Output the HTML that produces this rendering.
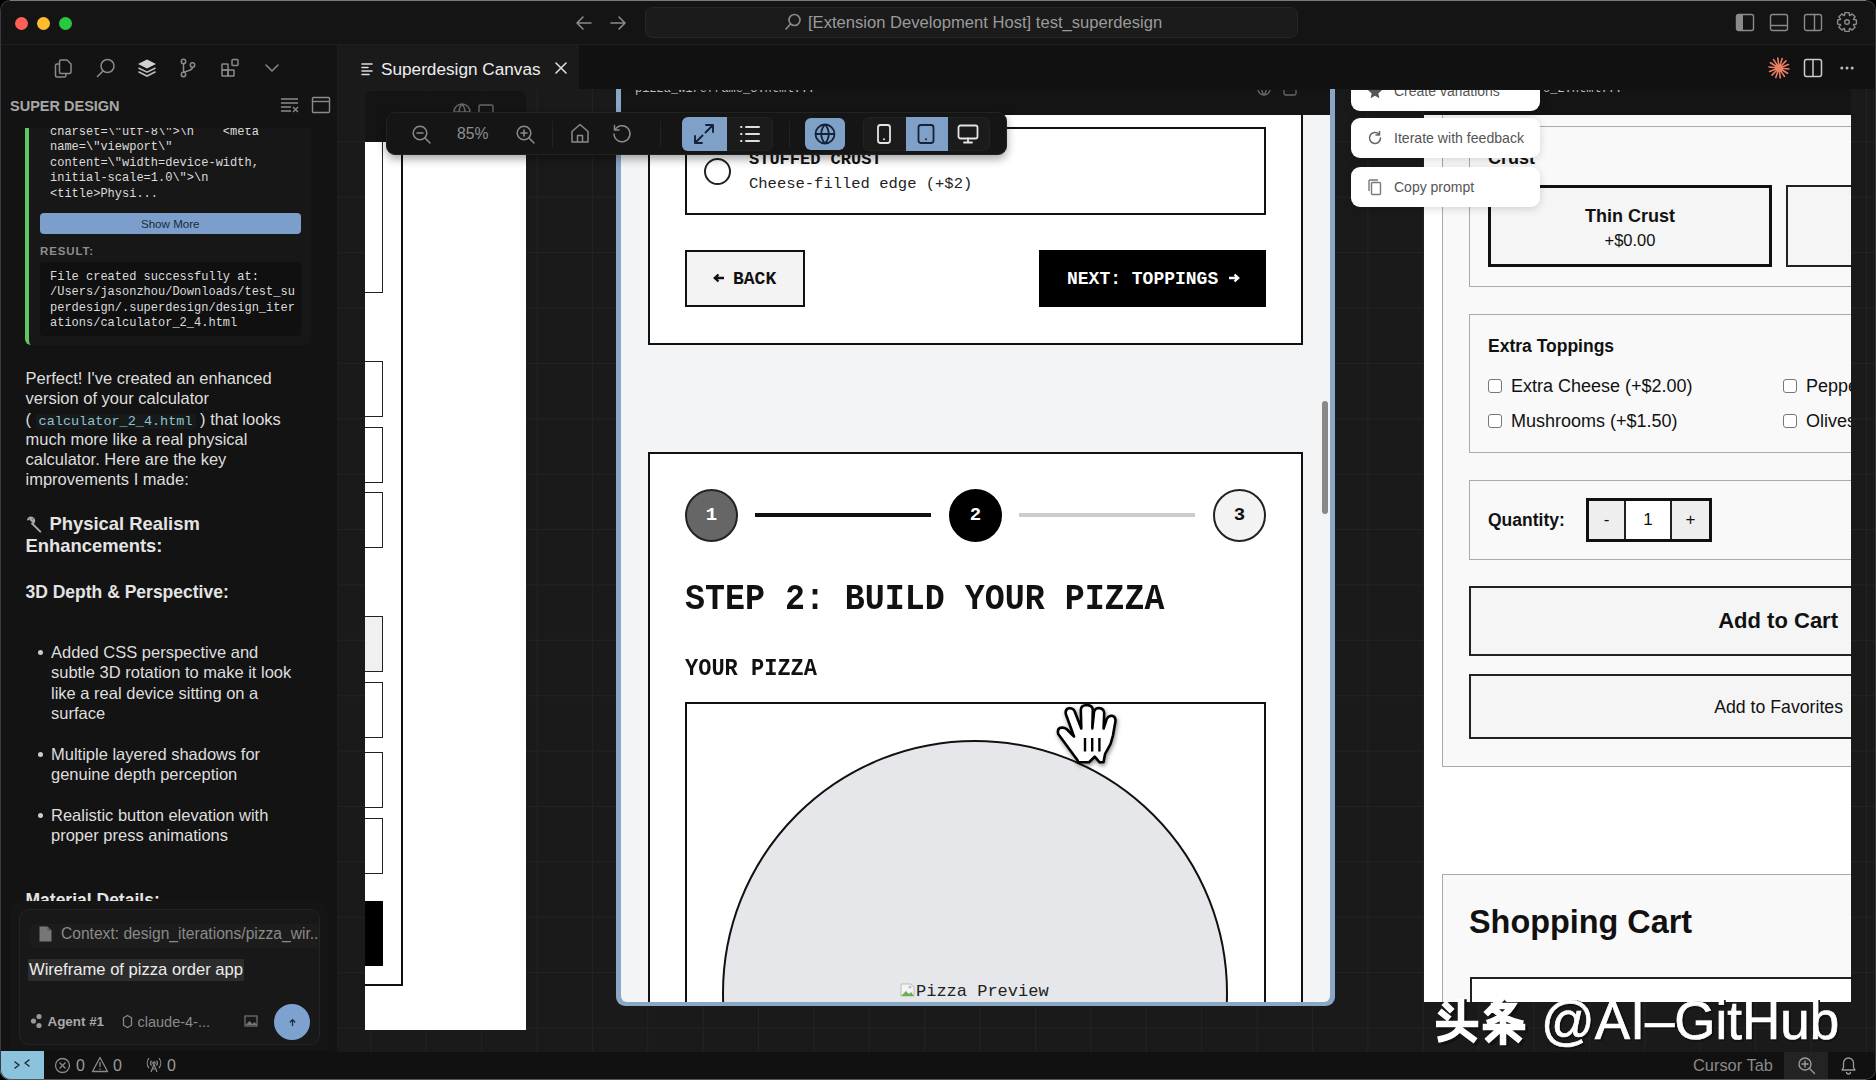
<!DOCTYPE html>
<html><head><meta charset="utf-8">
<style>
*{box-sizing:border-box;margin:0;padding:0}
html,body{width:1876px;height:1080px;overflow:hidden;background:#000}
body{position:relative;font-family:"Liberation Sans",sans-serif;color:#ddd}
.a{position:absolute}
.mono{font-family:"Liberation Mono",monospace}
svg{display:block}
/* title bar */
#win{left:0;top:0;width:1876px;height:1080px;background:#131313;border-radius:10px;overflow:hidden}
#title{left:0;top:0;width:1876px;height:45px;background:#141414;border-bottom:1px solid #1e1e1e}
.tl{width:13px;height:13px;border-radius:50%;top:17px}
#search{left:645px;top:7px;width:653px;height:31px;border-radius:7px;background:#1b1b1b;border:1px solid #262626}
#tabbar{left:338px;top:45px;width:1538px;height:45px;background:#111}
#tab{left:338px;top:45px;width:241px;height:45px;background:#1a1a1a}
/* sidebar */
#side{left:0;top:45px;width:338px;height:1006px;background:#131313;border-right:1px solid #1c1c1c}
/* canvas */
#canvas{left:338px;top:89px;width:1538px;height:963px;background-color:#1a1a1a;
 background-image:linear-gradient(to right,#232323 1px,transparent 1px),linear-gradient(to bottom,#232323 1px,transparent 1px);
 background-size:55.4px 55.4px;background-position:32.3px 52.3px;overflow:hidden}
#status{left:0;top:1051px;width:1876px;height:29px;background:#111}
</style></head><body>
<div id="win" class="a">
 <div id="title" class="a"></div>
 <div class="a tl" style="left:15px;background:#fe5f57"></div>
 <div class="a tl" style="left:37px;background:#febc2e"></div>
 <div class="a tl" style="left:59px;background:#28c840"></div>
 <div id="search" class="a"></div>
 <div id="tabbar" class="a"></div>
 <div id="tab" class="a"></div>
 <!-- TITLE BAR CONTENT -->
 <svg class="a" style="left:574px;top:14px" width="20" height="18" viewBox="0 0 20 18"><path d="M17 9H3M9 3L3 9l6 6" fill="none" stroke="#8a8a8a" stroke-width="1.6" stroke-linecap="round" stroke-linejoin="round"/></svg>
 <svg class="a" style="left:608px;top:14px" width="20" height="18" viewBox="0 0 20 18"><path d="M3 9h14M11 3l6 6-6 6" fill="none" stroke="#8a8a8a" stroke-width="1.6" stroke-linecap="round" stroke-linejoin="round"/></svg>
 <svg class="a" style="left:783px;top:12px" width="20" height="20" viewBox="0 0 20 20"><circle cx="11.5" cy="8" r="5.5" fill="none" stroke="#8a8a8a" stroke-width="1.6"/><path d="M7.5 12L3 17" stroke="#8a8a8a" stroke-width="1.6" stroke-linecap="round"/></svg>
 <div class="a" style="left:808px;top:12px;font-size:16.6px;line-height:22px;color:#9a9a9a;white-space:nowrap">[Extension Development Host] test_superdesign</div>
 <svg class="a" style="left:1735px;top:13px" width="20" height="19" viewBox="0 0 20 19"><rect x="1.5" y="1.5" width="17" height="16" rx="2" fill="none" stroke="#8a8a8a" stroke-width="1.4"/><rect x="2" y="2" width="6" height="15" fill="#8a8a8a"/></svg>
 <svg class="a" style="left:1769px;top:13px" width="20" height="19" viewBox="0 0 20 19"><rect x="1.5" y="1.5" width="17" height="16" rx="2" fill="none" stroke="#8a8a8a" stroke-width="1.4"/><path d="M2 12.5h16" stroke="#8a8a8a" stroke-width="1.4"/></svg>
 <svg class="a" style="left:1803px;top:13px" width="20" height="19" viewBox="0 0 20 19"><rect x="1.5" y="1.5" width="17" height="16" rx="2" fill="none" stroke="#8a8a8a" stroke-width="1.4"/><path d="M11.5 2v15" stroke="#8a8a8a" stroke-width="1.4"/></svg>
 <svg class="a" style="left:1835px;top:10px" width="24" height="24" viewBox="0 0 24 24"><path d="M9.53 5.45L9.90 2.63L14.10 2.63L14.47 5.45L14.89 5.62L17.14 3.89L20.11 6.86L18.38 9.11L18.55 9.53L21.37 9.90L21.37 14.10L18.55 14.47L18.38 14.89L20.11 17.14L17.14 20.11L14.89 18.38L14.47 18.55L14.10 21.37L9.90 21.37L9.53 18.55L9.11 18.38L6.86 20.11L3.89 17.14L5.62 14.89L5.45 14.47L2.63 14.10L2.63 9.90L5.45 9.53L5.62 9.11L3.89 6.86L6.86 3.89L9.11 5.62Z" fill="none" stroke="#8a8a8a" stroke-width="1.4" stroke-linejoin="round"/><circle cx="12" cy="12" r="2.3" fill="none" stroke="#8a8a8a" stroke-width="1.4"/></svg>

 <!-- TAB -->
 <svg class="a" style="left:360px;top:62px" width="16" height="15" viewBox="0 0 16 15"><path d="M2 2h10M2 5.5h6M2 9h10M2 12.5h7" stroke="#ddd" stroke-width="1.6" stroke-linecap="round"/></svg>
 <div class="a" style="left:381px;top:58px;font-size:17.2px;line-height:22px;color:#eee;white-space:nowrap">Superdesign Canvas</div>
 <svg class="a" style="left:553px;top:60px" width="16" height="16" viewBox="0 0 16 16"><path d="M3 3l10 10M13 3L3 13" stroke="#ddd" stroke-width="1.6" stroke-linecap="round"/></svg>
 <svg class="a" style="left:1767px;top:56px" width="24" height="24" viewBox="0 0 24 24"><path d="M14.49 12.25L21.95 13.00M14.13 13.30L20.53 17.22M13.36 14.10L17.42 20.40M12.31 14.48L13.24 21.92M11.20 14.37L8.81 21.48M10.25 13.79L5.02 19.16M9.65 12.85L2.60 15.42M9.51 11.75L2.05 11.00M9.87 10.70L3.47 6.78M10.64 9.90L6.58 3.60M11.69 9.52L10.76 2.08M12.80 9.63L15.19 2.52M13.75 10.21L18.98 4.84M14.35 11.15L21.40 8.58" stroke="#ea7f62" stroke-width="1.6" stroke-linecap="round"/><circle cx="12" cy="12" r="3.4" fill="#ea7f62"/></svg>
 <svg class="a" style="left:1803px;top:58px" width="20" height="20" viewBox="0 0 20 20"><rect x="1.5" y="1.5" width="17" height="17" rx="2" fill="none" stroke="#ccc" stroke-width="1.5"/><path d="M10 2v16" stroke="#ccc" stroke-width="1.5"/></svg>
 <svg class="a" style="left:1837px;top:62px" width="20" height="12" viewBox="0 0 20 12"><circle cx="4.8" cy="6" r="1.5" fill="#bbb"/><circle cx="10" cy="6" r="1.5" fill="#bbb"/><circle cx="15.2" cy="6" r="1.5" fill="#bbb"/></svg>

 <div id="side" class="a"></div>
 <div id="status" class="a"></div>
 <!-- SIDEBAR CONTENT -->
 <svg class="a" style="left:52px;top:57px" width="22" height="22" viewBox="0 0 22 22"><g fill="none" stroke="#8a8a8a" stroke-width="1.5" stroke-linejoin="round"><path d="M9 3h6l4 4v8a1.5 1.5 0 0 1-1.5 1.5H9A1.5 1.5 0 0 1 7.5 15V4.5A1.5 1.5 0 0 1 9 3z"/><path d="M7.5 7H5A1.5 1.5 0 0 0 3.5 8.5v10A1.5 1.5 0 0 0 5 20h7.5A1.5 1.5 0 0 0 14 18.5v-2"/></g></svg>
 <svg class="a" style="left:95px;top:57px" width="22" height="22" viewBox="0 0 22 22"><circle cx="12.5" cy="9" r="6.5" fill="none" stroke="#8a8a8a" stroke-width="1.5"/><path d="M8 14L2.5 19.5" stroke="#8a8a8a" stroke-width="1.6" stroke-linecap="round"/></svg>
 <svg class="a" style="left:136px;top:57px" width="22" height="22" viewBox="0 0 22 22"><path d="M11 2.5l9 4.5-9 4.5-9-4.5z" fill="#d0d0d0"/><path d="M2.5 11L11 15.2 19.5 11" fill="none" stroke="#bbb" stroke-width="1.6"/><path d="M2.5 14.8L11 19 19.5 14.8" fill="none" stroke="#bbb" stroke-width="1.6"/></svg>
 <svg class="a" style="left:177px;top:57px" width="22" height="22" viewBox="0 0 22 22"><g fill="none" stroke="#8a8a8a" stroke-width="1.5"><circle cx="6.5" cy="4.5" r="2.2"/><circle cx="6.5" cy="17.5" r="2.2"/><circle cx="15.5" cy="8" r="2.2"/><path d="M6.5 6.7v8.6M15.5 10.2c0 3-4 3.5-9 5"/></g></svg>
 <svg class="a" style="left:219px;top:57px" width="22" height="22" viewBox="0 0 22 22"><g fill="none" stroke="#8a8a8a" stroke-width="1.5"><rect x="3" y="7" width="6" height="6" rx=".5"/><rect x="3" y="13" width="6" height="6" rx=".5"/><rect x="9" y="13" width="6" height="6" rx=".5"/><rect x="13" y="2.5" width="6" height="6" rx="1"/></g></svg>
 <svg class="a" style="left:264px;top:63px" width="16" height="10" viewBox="0 0 16 10"><path d="M2 2l6 6 6-6" fill="none" stroke="#8a8a8a" stroke-width="1.5" stroke-linecap="round"/></svg>
 <div class="a" style="left:10px;top:97px;font-size:14.5px;font-weight:bold;color:#a8a8a8;line-height:18px;white-space:nowrap">SUPER DESIGN</div>
 <svg class="a" style="left:280px;top:97px" width="20" height="17" viewBox="0 0 20 17"><g stroke="#8a8a8a" stroke-width="1.3"><path d="M1 2h17M1 6h17M1 10h10M1 14h10"/><path d="M13 10l5 5M18 10l-5 5"/></g></svg>
 <svg class="a" style="left:311px;top:96px" width="20" height="18" viewBox="0 0 20 18"><rect x="1.5" y="1.5" width="17" height="15" rx="1" fill="none" stroke="#8a8a8a" stroke-width="1.4"/><path d="M2 5.5h16" stroke="#8a8a8a" stroke-width="1.4"/></svg>

 <div class="a" style="left:0;top:128px;width:337px;height:773px;overflow:hidden">
  <div class="a" style="left:25px;top:-20px;width:286px;height:237px;background:#171717;border-radius:6px;border-left:4px solid #62c462"></div>
  <div class="a mono" style="left:50px;top:-3px;font-size:12px;line-height:15.4px;color:#dcdcdc;white-space:pre">charset=\"utf-8\">\n    &lt;meta
name=\"viewport\"
content=\"width=device-width,
initial-scale=1.0\">\n
&lt;title>Physi...</div>
  <div class="a" style="left:39.5px;top:84.5px;width:261.5px;height:21.5px;background:#7b9fca;border-radius:4px;text-align:center;font-size:11.6px;line-height:21.5px;color:#1a2a3e">Show More</div>
  <div class="a" style="left:40px;top:116px;font-size:11.5px;font-weight:bold;color:#8e8e8e;line-height:14px;letter-spacing:0.9px">RESULT:</div>
  <div class="a" style="left:39.5px;top:134px;width:261px;height:74px;background:#101010;border-radius:4px"></div>
  <div class="a mono" style="left:50px;top:142px;font-size:12px;line-height:15.4px;color:#dcdcdc;white-space:pre">File created successfully at:
/Users/jasonzhou/Downloads/test_su
perdesign/.superdesign/design_iter
ations/calculator_2_4.html</div>
  <div class="a" style="left:25.5px;top:240px;width:300px;font-size:16.5px;line-height:20.3px;color:#dedede;white-space:nowrap">Perfect! I've created an enhanced<br>version of your calculator<br>( <span class="mono" style="font-size:13.5px;line-height:10px;color:#8fc3cf;background:#161a1b;padding:0 3px">calculator_2_4.html</span> ) that looks<br>much more like a real physical<br>calculator. Here are the key<br>improvements I made:</div>
  <svg class="a" style="left:25px;top:387px" width="19" height="18" viewBox="0 0 19 18"><path d="M3 4.5a3.2 3.2 0 0 1 4.3-1.7L5.5 4.6l1.6 1.6 1.8-1.8A3.2 3.2 0 0 1 7.3 8.7l8 8" fill="none" stroke="#aaa" stroke-width="1.9" stroke-linecap="round"/></svg>
  <div class="a" style="left:25.5px;top:385px;font-size:18.4px;font-weight:bold;line-height:22px;color:#e4e4e4;white-space:nowrap"><span style="display:inline-block;width:24px"></span>Physical Realism<br>Enhancements:</div>
  <div class="a" style="left:25.5px;top:453px;font-size:17.5px;font-weight:bold;line-height:22px;color:#e4e4e4;white-space:nowrap">3D Depth &amp; Perspective:</div>
  <div class="a" style="left:51px;top:514px;font-size:16.5px;line-height:20.3px;color:#dedede;white-space:nowrap">Added CSS perspective and<br>subtle 3D rotation to make it look<br>like a real device sitting on a<br>surface</div>
  <div class="a" style="left:51px;top:616px;font-size:16.5px;line-height:20.3px;color:#dedede;white-space:nowrap">Multiple layered shadows for<br>genuine depth perception</div>
  <div class="a" style="left:51px;top:677px;font-size:16.5px;line-height:20.3px;color:#dedede;white-space:nowrap">Realistic button elevation with<br>proper press animations</div>
  <div class="a" style="left:38px;top:522px;width:5px;height:5px;border-radius:50%;background:#ccc"></div>
  <div class="a" style="left:38px;top:624px;width:5px;height:5px;border-radius:50%;background:#ccc"></div>
  <div class="a" style="left:38px;top:685px;width:5px;height:5px;border-radius:50%;background:#ccc"></div>
  <div class="a" style="left:25.5px;top:761px;font-size:17.5px;font-weight:bold;line-height:22px;color:#e4e4e4;white-space:nowrap">Material Details:</div>
 </div>

 <!-- CHAT INPUT -->
 <div class="a" style="left:10px;top:901px;width:318px;height:150px;background:#151515;border-radius:10px 10px 0 0"></div>
 <div class="a" style="left:19px;top:909px;width:301px;height:136px;background:#181818;border:1px solid #242424;border-radius:10px"></div>
 <div class="a" style="left:30px;top:924px;width:289px;height:24px;background:#1c1c1c;border-radius:4px"></div>
 <svg class="a" style="left:38px;top:925px" width="15" height="18" viewBox="0 0 15 18"><path d="M1.5 1.5h8l4 4v11h-12z" fill="#777"/><path d="M9.5 1.5v4h4" fill="#555"/></svg>
 <div class="a" style="left:61px;top:924px;font-size:15.6px;line-height:20px;color:#8a8a8a;white-space:nowrap">Context: design_iterations/pizza_wir..</div>
 <div class="a" style="left:28px;top:959px;width:216px;height:22px;background:#2c2c2c"></div>
 <div class="a" style="left:29px;top:959px;font-size:16.6px;line-height:22px;color:#ececec;white-space:nowrap">Wireframe of pizza order app</div>
 <svg class="a" style="left:30px;top:1013px" width="13" height="16" viewBox="0 0 13 16"><circle cx="9" cy="3.5" r="2.6" fill="#999"/><circle cx="3.5" cy="8" r="2.6" fill="#999"/><circle cx="9" cy="12.5" r="2.6" fill="#999"/></svg>
 <div class="a" style="left:47.5px;top:1013px;font-size:13.4px;font-weight:bold;line-height:18px;color:#a8a8a8;white-space:nowrap">Agent #1</div>
 <svg class="a" style="left:122px;top:1014px" width="11" height="15" viewBox="0 0 11 15"><path d="M5.5 1.5l4 2.3v7.4l-4 2.3-4-2.3V3.8z" fill="none" stroke="#888" stroke-width="1.3"/></svg>
 <div class="a" style="left:137.5px;top:1013px;font-size:14.5px;line-height:18px;color:#8a8a8a;white-space:nowrap">claude-4-...</div>
 <svg class="a" style="left:244px;top:1015px" width="14" height="12" viewBox="0 0 14 12"><rect x="1" y="1" width="12" height="10" fill="none" stroke="#777" stroke-width="1.2"/><path d="M1.5 10l4-4 3 3 2-2 2.5 3z" fill="#777"/></svg>
 <div class="a" style="left:274px;top:1004px;width:36px;height:36px;border-radius:50%;background:#7ea2d0"></div>
 <svg class="a" style="left:287px;top:1016px" width="11" height="12" viewBox="0 0 11 12"><path d="M5.5 9.5V4M3.2 6l2.3-2.3L7.8 6" fill="none" stroke="#1b2b40" stroke-width="1.3" stroke-linecap="round"/></svg>

 <!-- STATUS BAR -->
 <div class="a" style="left:0;top:1051px;width:44px;height:29px;background:#8cc3dc"></div>
 <svg class="a" style="left:12px;top:1057px" width="20" height="16" viewBox="0 0 20 16"><path d="M3 11l4-3-4-3M17 3l-4 3 4 3" fill="none" stroke="#1a2a35" stroke-width="1.5" stroke-linecap="round" stroke-linejoin="round"/></svg>
 <svg class="a" style="left:54px;top:1057px" width="17" height="17" viewBox="0 0 17 17"><circle cx="8.5" cy="8.5" r="7" fill="none" stroke="#8a8a8a" stroke-width="1.3"/><path d="M5.5 5.5l6 6M11.5 5.5l-6 6" stroke="#8a8a8a" stroke-width="1.3"/></svg>
 <div class="a" style="left:76px;top:1056px;font-size:16px;line-height:20px;color:#9a9a9a">0</div>
 <svg class="a" style="left:91px;top:1056px" width="18" height="17" viewBox="0 0 18 17"><path d="M9 1.5L16.5 15.5h-15z" fill="none" stroke="#8a8a8a" stroke-width="1.3" stroke-linejoin="round"/><path d="M9 6v5M9 12.5v1.2" stroke="#8a8a8a" stroke-width="1.3"/></svg>
 <div class="a" style="left:113px;top:1056px;font-size:16px;line-height:20px;color:#9a9a9a">0</div>
 <svg class="a" style="left:145px;top:1056px" width="18" height="17" viewBox="0 0 18 17"><g fill="none" stroke="#8a8a8a" stroke-width="1.2"><path d="M4 2a8 8 0 0 0 0 10M14 2a8 8 0 0 1 0 10M6.5 4.5a4 4 0 0 0 0 5M11.5 4.5a4 4 0 0 1 0 5"/><circle cx="9" cy="7" r="1.2"/><path d="M9 8.5L6 16M9 8.5l3 7.5M7 13h4"/></g></svg>
 <div class="a" style="left:167px;top:1056px;font-size:16px;line-height:20px;color:#9a9a9a">0</div>
 <div class="a" style="left:1693px;top:1055px;font-size:16.4px;line-height:20px;color:#8a8a8a;white-space:nowrap">Cursor Tab</div>
 <div class="a" style="left:1784px;top:1051px;width:44px;height:29px;background:#232323"></div>
 <svg class="a" style="left:1797px;top:1056px" width="19" height="19" viewBox="0 0 19 19"><circle cx="8" cy="8" r="6" fill="none" stroke="#9a9a9a" stroke-width="1.4"/><path d="M12.5 12.5l5 5M8 5v6M5 8h6" stroke="#9a9a9a" stroke-width="1.4" stroke-linecap="round"/></svg>
 <svg class="a" style="left:1840px;top:1056px" width="17" height="19" viewBox="0 0 17 19"><path d="M8.5 2a5 5 0 0 0-5 5v4.5L2 14h13l-1.5-2.5V7a5 5 0 0 0-5-5zM6.5 16a2 2 0 0 0 4 0" fill="none" stroke="#9a9a9a" stroke-width="1.3" stroke-linejoin="round"/></svg>

 <div id="canvas" class="a"></div>

 <!-- LEFT FRAME -->
 <div class="a" style="left:365px;top:91px;width:161px;height:52px;background:#141414;border-radius:6px 6px 0 0"></div>
 <div class="a" style="left:365px;top:142px;width:161px;height:888px;background:#fff;overflow:hidden">
   <div class="a" style="left:-40px;top:-20px;width:78px;height:864px;border:2px solid #111;border-left:none"></div>
   <div class="a" style="left:-40px;top:-10px;width:58px;height:161px;border:1.5px solid #222"></div>
   <div class="a" style="left:-40px;top:219px;width:58px;height:56px;border:1.5px solid #222"></div>
   <div class="a" style="left:-40px;top:285px;width:58px;height:56px;border:1.5px solid #222"></div>
   <div class="a" style="left:-40px;top:350px;width:58px;height:56px;border:1.5px solid #222"></div>
   <div class="a" style="left:-40px;top:474px;width:58px;height:56px;border:1.5px solid #222;background:#f0f0f0"></div>
   <div class="a" style="left:-40px;top:540px;width:58px;height:56px;border:1.5px solid #222"></div>
   <div class="a" style="left:-40px;top:610px;width:58px;height:56px;border:1.5px solid #222"></div>
   <div class="a" style="left:-40px;top:676px;width:58px;height:56px;border:1.5px solid #222"></div>
   <div class="a" style="left:-40px;top:759px;width:58px;height:65px;background:#000"></div>
 </div>

 <!-- CENTER FRAME -->
 <div class="a" style="left:616px;top:89px;width:719px;height:917px;background:#8ba7c6;border-radius:0 0 9px 9px"></div>
 <div class="a" style="left:621px;top:89px;width:709px;height:26px;background:#141414"></div>
 <div class="a" style="left:621px;top:115px;width:709px;height:887px;background:#f3f4f6;overflow:hidden;border-radius:0 0 6px 6px">
   <!-- card 1 -->
   <div class="a" style="left:27px;top:-40px;width:655px;height:270px;background:#fff;border:2px solid #111"></div>
   <div class="a" style="left:64px;top:12px;width:581px;height:88px;background:#fff;border:2px solid #111"></div>
   <div class="a" style="left:83px;top:43px;width:27px;height:27px;border:2px solid #222;border-radius:50%"></div>
   <div class="a mono" style="left:128px;top:35px;font-size:17px;font-weight:bold;color:#111;line-height:20px">STUFFED CRUST</div>
   <div class="a mono" style="left:128px;top:59px;font-size:15.5px;color:#222;line-height:20px">Cheese-filled edge (+$2)</div>
   <div class="a mono" style="left:64px;top:135px;width:120px;height:57px;background:#f3f3f3;border:2px solid #111;font-size:18px;font-weight:bold;color:#111;line-height:55px;padding-left:26px"><svg style="display:inline-block;vertical-align:1px;margin-right:8px" width="12" height="10" viewBox="0 0 12 10"><path d="M11 5H2.5M5.5 1.5L1.8 5l3.7 3.5" fill="none" stroke="#111" stroke-width="2.4"/></svg>BACK</div>
   <div class="a mono" style="left:418px;top:135px;width:227px;height:57px;background:#000;font-size:18px;font-weight:bold;color:#fff;line-height:58px;padding-left:28px;white-space:nowrap">NEXT: TOPPINGS<svg style="display:inline-block;vertical-align:1px;margin-left:10px" width="12" height="10" viewBox="0 0 12 10"><path d="M1 5h8.5M6.5 1.5L10.2 5 6.5 8.5" fill="none" stroke="#fff" stroke-width="2.4"/></svg></div>
   <!-- card 2 -->
   <div class="a" style="left:27px;top:337px;width:655px;height:700px;background:#fff;border:2px solid #111"></div>
   <div class="a" style="left:64px;top:374px;width:53px;height:53px;border:2px solid #222;border-radius:50%;background:#666;color:#fff;font:bold 19px 'Liberation Mono';text-align:center;line-height:49px">1</div>
   <div class="a" style="left:134px;top:398px;width:176px;height:4px;background:#111"></div>
   <div class="a" style="left:328px;top:374px;width:53px;height:53px;border-radius:50%;background:#000;color:#fff;font:bold 19px 'Liberation Mono';text-align:center;line-height:53px">2</div>
   <div class="a" style="left:398px;top:398px;width:176px;height:4px;background:#ccc"></div>
   <div class="a" style="left:592px;top:374px;width:53px;height:53px;border:2px solid #222;border-radius:50%;background:#f3f3f3;color:#111;font:bold 19px 'Liberation Mono';text-align:center;line-height:49px">3</div>
   <div class="a mono" style="left:64px;top:463.5px;font-size:33.3px;font-weight:bold;color:#111;line-height:40px;white-space:nowrap;transform:scaleY(1.09);transform-origin:0 50%">STEP 2: BUILD YOUR PIZZA</div>
   <div class="a mono" style="left:64px;top:542px;font-size:22px;font-weight:bold;color:#111;line-height:26px;white-space:nowrap;transform:scaleY(1.07);transform-origin:0 50%">YOUR PIZZA</div>
   <div class="a" style="left:64px;top:587px;width:581px;height:400px;background:#fff;border:2px solid #111;overflow:hidden">
     <div class="a" style="left:35px;top:36px;width:506px;height:506px;border-radius:50%;background:#e5e7eb;border:2px solid #111"></div>
     <div class="a mono" style="left:212px;top:277px;font-size:17px;color:#222;line-height:20px;white-space:nowrap"><svg style="display:inline-block;vertical-align:-2px" width="17" height="17" viewBox="0 0 17 17"><path d="M2 3h10l3 3v9H2z" fill="#f4f4f4" stroke="#bbb" stroke-width="1"/><path d="M2 15l5-5 3 3 2-2 3 4z" fill="#6fae57"/><circle cx="11" cy="6" r="1.5" fill="#9bc4e8"/></svg>Pizza Preview</div>
   </div>
   <div class="a" style="left:701px;top:286px;width:6px;height:113px;background:#888;border-radius:3px"></div>
 </div>

 <!-- RIGHT FRAME -->
 <div class="a" style="left:1424px;top:89px;width:427px;height:26px;background:#141414"></div>
 <div class="a" style="left:1424px;top:115px;width:427px;height:887px;background:#fff;overflow:hidden">
   <div class="a" style="left:18px;top:-30px;width:500px;height:682px;background:#f9f9f9;border:1.5px solid #aaa"></div>
   <div class="a" style="left:45px;top:11px;width:500px;height:161px;border:1.5px solid #aaa"></div>
   <div class="a" style="left:64px;top:33px;font:bold 18px 'Liberation Sans';color:#111">Crust</div>
   <div class="a" style="left:64px;top:70px;width:284px;height:82px;background:#f5f5f5;border:3.5px solid #111;text-align:center;color:#111">
     <div style="font:bold 18px 'Liberation Sans';margin-top:17px;line-height:22px">Thin Crust</div>
     <div style="font:16.5px 'Liberation Sans';line-height:24px;margin-top:1px">+$0.00</div>
   </div>
   <div class="a" style="left:362px;top:70px;width:200px;height:82px;background:#f5f5f5;border:2px solid #222"></div>
   <div class="a" style="left:45px;top:199px;width:500px;height:139px;border:1.5px solid #aaa"></div>
   <div class="a" style="left:64px;top:220px;font:bold 17.5px 'Liberation Sans';color:#111;line-height:22px">Extra Toppings</div>
   <div class="a" style="left:64px;top:264px;width:14px;height:14px;border:1px solid #777;border-radius:3px;background:#fff"></div>
   <div class="a" style="left:87px;top:260px;font:18px 'Liberation Sans';color:#111;line-height:22px">Extra Cheese (+$2.00)</div>
   <div class="a" style="left:64px;top:299px;width:14px;height:14px;border:1px solid #777;border-radius:3px;background:#fff"></div>
   <div class="a" style="left:87px;top:295px;font:18px 'Liberation Sans';color:#111;line-height:22px">Mushrooms (+$1.50)</div>
   <div class="a" style="left:359px;top:264px;width:14px;height:14px;border:1px solid #777;border-radius:3px;background:#fff"></div>
   <div class="a" style="left:382px;top:260px;font:18px 'Liberation Sans';color:#111;line-height:22px;white-space:nowrap">Pepperoni (+$2.50)</div>
   <div class="a" style="left:359px;top:299px;width:14px;height:14px;border:1px solid #777;border-radius:3px;background:#fff"></div>
   <div class="a" style="left:382px;top:295px;font:18px 'Liberation Sans';color:#111;line-height:22px;white-space:nowrap">Olives (+$1.00)</div>
   <div class="a" style="left:45px;top:365px;width:500px;height:80px;border:1.5px solid #aaa"></div>
   <div class="a" style="left:64px;top:394px;font:bold 17.5px 'Liberation Sans';color:#111;line-height:22px">Quantity:</div>
   <div class="a" style="left:162px;top:383px;width:126px;height:44px;border:3px solid #111;background:#fff">
     <div class="a" style="left:0;top:0;width:37px;height:38px;background:#eee;border-right:2px solid #222;text-align:center;font:17px 'Liberation Sans';line-height:38px;color:#111">-</div>
     <div class="a" style="left:37px;top:0;width:44px;height:38px;text-align:center;font:17px 'Liberation Sans';line-height:38px;color:#111">1</div>
     <div class="a" style="left:81px;top:0;width:39px;height:38px;background:#eee;border-left:2px solid #222;text-align:center;font:17px 'Liberation Sans';line-height:38px;color:#111">+</div>
   </div>
   <div class="a" style="left:45px;top:471px;width:500px;height:70px;background:#f5f5f5;border:2px solid #222"></div>
   <div class="a" style="left:0;top:493px;width:414px;text-align:right;font:bold 22px 'Liberation Sans';color:#111;line-height:26px">Add to Cart</div>
   <div class="a" style="left:45px;top:559px;width:500px;height:65px;background:#f5f5f5;border:2px solid #222"></div>
   <div class="a" style="left:0;top:581px;width:419px;text-align:right;font:17.7px 'Liberation Sans';color:#111;line-height:22px">Add to Favorites</div>
   <div class="a" style="left:18px;top:759px;width:500px;height:300px;background:#f9f9f9;border:1.5px solid #aaa"></div>
   <div class="a" style="left:45px;top:788px;font:bold 32.4px 'Liberation Sans';color:#111;line-height:38px;white-space:nowrap">Shopping Cart</div>
   <div class="a" style="left:46px;top:862px;width:500px;height:100px;background:#fff;border:2px solid #222"></div>
 </div>


 <div class="a" style="left:0;top:90px;width:1876px;height:30px;overflow:hidden">
  <div class="a mono" style="left:635px;top:-8px;font-size:12px;line-height:14px;color:#bbb;white-space:nowrap">pizza_wireframe_3.html...</div>
  <svg class="a" style="left:1256px;top:-9px" width="16" height="16" viewBox="0 0 16 16"><g fill="none" stroke="#666" stroke-width="1.3"><circle cx="8" cy="8" r="6"/><path d="M2 8h12M8 2c-3 3.5-3 8.5 0 12M8 2c3 3.5 3 8.5 0 12"/></g></svg>
  <svg class="a" style="left:1282px;top:-9px" width="16" height="16" viewBox="0 0 16 16"><rect x="2" y="2" width="12" height="12" rx="1.5" fill="none" stroke="#666" stroke-width="1.3"/></svg>
  <div class="a mono" style="left:1543px;top:-8px;font-size:12px;line-height:14px;color:#bbb;white-space:nowrap">o_2.html...</div>
  <svg class="a" style="left:452px;top:12px" width="20" height="20" viewBox="0 0 20 20"><g fill="none" stroke="#666" stroke-width="1.4"><circle cx="10" cy="10" r="8"/><path d="M2 10h16M10 2c-4 4.5-4 11.5 0 16M10 2c4 4.5 4 11.5 0 16"/></g></svg>
  <svg class="a" style="left:477px;top:12px" width="18" height="20" viewBox="0 0 18 20"><rect x="2" y="3" width="14" height="15" rx="1.5" fill="none" stroke="#666" stroke-width="1.4"/></svg>
 </div>
 <!-- TOOLBAR -->
 <div class="a" style="left:386px;top:112px;width:621px;height:43px;background:#151515;border:1px solid #222;border-radius:9px;box-shadow:0 4px 10px rgba(0,0,0,.35)"></div>
 <svg class="a" style="left:411px;top:124px" width="21" height="21" viewBox="0 0 21 21"><circle cx="9" cy="9" r="6.8" fill="none" stroke="#8a8a8a" stroke-width="1.5"/><path d="M14 14l5 5M6 9h6" stroke="#8a8a8a" stroke-width="1.6" stroke-linecap="round"/></svg>
 <div class="a" style="left:457px;top:124px;font-size:15.7px;line-height:20px;color:#8e8e8e">85%</div>
 <svg class="a" style="left:515px;top:124px" width="21" height="21" viewBox="0 0 21 21"><circle cx="9" cy="9" r="6.8" fill="none" stroke="#8a8a8a" stroke-width="1.5"/><path d="M14 14l5 5M6 9h6M9 6v6" stroke="#8a8a8a" stroke-width="1.6" stroke-linecap="round"/></svg>
 <div class="a" style="left:552px;top:121px;width:1px;height:26px;background:#222"></div>
 <svg class="a" style="left:569px;top:122px" width="22" height="22" viewBox="0 0 22 22"><path d="M3 20V9.5L11 2.5l8 7V20zM8.5 20v-6.5h5V20" fill="none" stroke="#8a8a8a" stroke-width="1.5" stroke-linejoin="round"/></svg>
 <svg class="a" style="left:611px;top:123px" width="22" height="22" viewBox="0 0 22 22"><path d="M4.2 6.5A8 8 0 1 1 3 11" fill="none" stroke="#8a8a8a" stroke-width="1.5" stroke-linecap="round"/><path d="M3.5 2.5v4.5H8" fill="none" stroke="#8a8a8a" stroke-width="1.5" stroke-linecap="round" stroke-linejoin="round"/></svg>
 <div class="a" style="left:660px;top:121px;width:1px;height:26px;background:#222"></div>
 <div class="a" style="left:682px;top:117px;width:91px;height:34px;background:#1b1b1b;border:1px solid #232323;border-radius:6px"></div>
 <div class="a" style="left:682px;top:117px;width:45px;height:34px;background:#7fa1c8;border-radius:6px 0 0 6px"></div>
 <svg class="a" style="left:692px;top:122px" width="24" height="24" viewBox="0 0 24 24"><path d="M14 3h7v7M21 3l-7.5 7.5M10 21H3v-7M3 21l7.5-7.5" fill="none" stroke="#152238" stroke-width="1.9" stroke-linecap="round" stroke-linejoin="round"/></svg>
 <svg class="a" style="left:738px;top:123px" width="24" height="22" viewBox="0 0 24 22"><g stroke="#ddd" stroke-width="2" stroke-linecap="round"><path d="M8 4h13M8 11h13M8 18h13"/><path d="M3 4h.5M3 11h.5M3 18h.5"/></g></svg>
 <div class="a" style="left:789px;top:121px;width:1px;height:26px;background:#222"></div>
 <div class="a" style="left:805px;top:118px;width:40px;height:32px;background:#7fa1c8;border-radius:6px"></div>
 <svg class="a" style="left:813px;top:122px" width="24" height="24" viewBox="0 0 24 24"><g fill="none" stroke="#152238" stroke-width="1.8"><circle cx="12" cy="12" r="9.5"/><path d="M2.5 12h19M12 2.5c-5 5.5-5 13.5 0 19M12 2.5c5 5.5 5 13.5 0 19"/></g></svg>
 <div class="a" style="left:863px;top:117px;width:127px;height:34px;background:#1b1b1b;border:1px solid #232323;border-radius:6px"></div>
 <div class="a" style="left:906px;top:117px;width:42px;height:34px;background:#7fa1c8"></div>
 <svg class="a" style="left:875px;top:123px" width="18" height="22" viewBox="0 0 18 22"><rect x="3" y="2" width="12" height="18" rx="2.5" fill="none" stroke="#e4e4e4" stroke-width="1.8"/><circle cx="9" cy="16.3" r="1" fill="#e4e4e4"/></svg>
 <svg class="a" style="left:916px;top:123px" width="20" height="22" viewBox="0 0 20 22"><rect x="2.5" y="2" width="15" height="18" rx="2.5" fill="none" stroke="#152238" stroke-width="1.8"/><circle cx="10" cy="16.3" r="1" fill="#152238"/></svg>
 <svg class="a" style="left:956px;top:123px" width="24" height="22" viewBox="0 0 24 22"><g fill="none" stroke="#e4e4e4" stroke-width="1.8" stroke-linecap="round"><rect x="2.5" y="2.5" width="19" height="13" rx="2"/><path d="M12 15.5v3.5M8 19.5h8"/></g></svg>

 <!-- POPUP -->
 <div class="a" style="left:0;top:90px;width:1876px;height:200px;overflow:hidden">
 <div class="a" style="left:1351px;top:-30.0px;width:189px;height:51px;background:#fff;border-radius:9px;box-shadow:0 2px 8px rgba(0,0,0,.15)"></div>
 <div class="a" style="left:1351px;top:28.0px;width:189px;height:40px;background:#fff;border-radius:9px;box-shadow:0 2px 8px rgba(0,0,0,.15)"></div>
 <div class="a" style="left:1351px;top:76.5px;width:189px;height:40.5px;background:#fff;border-radius:9px;box-shadow:0 2px 8px rgba(0,0,0,.15)"></div>
 <svg class="a" style="left:1367px;top:-6.0px" width="16" height="16" viewBox="0 0 16 16"><path d="M8 1l2.1 4.6 5 .5-3.8 3.3 1.1 4.9L8 11.8l-4.4 2.5 1.1-4.9L.9 6.1l5-.5z" fill="#555"/></svg>
 <div class="a" style="left:1394px;top:-8.5px;font-size:14px;line-height:18px;color:#555;white-space:nowrap">Create variations</div>
 <svg class="a" style="left:1367px;top:40.0px" width="16" height="16" viewBox="0 0 16 16"><path d="M13.5 8a5.5 5.5 0 1 1-1.6-3.9" fill="none" stroke="#666" stroke-width="1.6" stroke-linecap="round"/><path d="M12.5 1.5v3.5H9" fill="none" stroke="#666" stroke-width="1.6" stroke-linecap="round" stroke-linejoin="round"/></svg>
 <div class="a" style="left:1394px;top:39.0px;font-size:14.1px;line-height:18px;color:#555;white-space:nowrap">Iterate with feedback</div>
 <svg class="a" style="left:1366px;top:88.0px" width="18" height="18" viewBox="0 0 18 18"><g fill="none" stroke="#777" stroke-width="1.4"><rect x="5.5" y="4.5" width="9" height="12" rx="1"/><path d="M3 13V3a1 1 0 0 1 1-1h8"/></g></svg>
 <div class="a" style="left:1394px;top:88.0px;font-size:14px;line-height:18px;color:#555;white-space:nowrap">Copy prompt</div>

 </div>
 <!-- HAND CURSOR -->
 <svg class="a" style="left:1050px;top:700px;filter:drop-shadow(1px 2px 2px rgba(0,0,0,.45))" width="75" height="68" viewBox="0 0 75 68"><path d="M27.7 60.5L8.2 34Q7 29 10.5 27.8Q14 27 16.5 29L24 36.5L15.8 14Q15 9 19 8.3Q23 7.8 24.5 11L31.3 28.5L30.8 10Q31 5 37 5Q42.7 5.5 42.8 10L42.3 28.5L44 12Q45 8 49 8Q53.8 8.5 54.2 13L53.6 28.5L56.7 19Q58.5 15.5 62 15.7Q65.8 16.5 65.5 21L63 35.3L60.5 44L55 54.2L53.5 62.3L49.7 62.3L44.7 56.7L39 62.3L28.3 62.3Z" fill="#fff" stroke="#000" stroke-width="2.6" stroke-linejoin="round"/><path d="M35 38v13.5M42.2 38v13.5M49.4 38v13.5" stroke="#000" stroke-width="2.4"/></svg>
 <!-- WATERMARK -->
 <svg class="a" style="left:1436px;top:999px" width="100" height="48" viewBox="0 0 100 48">
  <g transform="translate(2.5,2.5)" stroke="#111" stroke-width="6.5" fill="none" stroke-linecap="square">
   <path d="M10 6l4 4M6 14l5 4M2 25h37M25 1v21c0 8-6 15-20 18M25 31l12 9"/>
   <path d="M64 1l-12 12M58 7h18c-5 8-13 13-22 16M60 12c7 6 14 10 24 12M50 28h36M67 22v21M63 31l-10 9M71 31l11 9"/>
  </g>
  <g stroke="#fff" stroke-width="6.5" fill="none" stroke-linecap="square">
   <path d="M10 6l4 4M6 14l5 4M2 25h37M25 1v21c0 8-6 15-20 18M25 31l12 9"/>
   <path d="M64 1l-12 12M58 7h18c-5 8-13 13-22 16M60 12c7 6 14 10 24 12M50 28h36M67 22v21M63 31l-10 9M71 31l11 9"/>
  </g>
 </svg>
 <div class="a" style="left:1541px;top:991px;font-size:53px;line-height:60px;color:#fff;white-space:nowrap;-webkit-text-stroke:0.7px #fff;text-shadow:2px 2px 0 #111,2px 0 0 #111,0 2px 0 #111">@AI&ndash;GitHub</div>
 <div class="a" style="left:0;top:0;width:1876px;height:1080px;border-radius:10px;box-shadow:inset 0 0 0 1px #3a3a3a;pointer-events:none"></div>
</div>
 <div class="a" style="left:10px;top:0;width:1856px;height:1px;background:#7a7a7a"></div>
 <div class="a" style="left:10px;top:1079px;width:1856px;height:1px;background:#555"></div>
</body></html>
